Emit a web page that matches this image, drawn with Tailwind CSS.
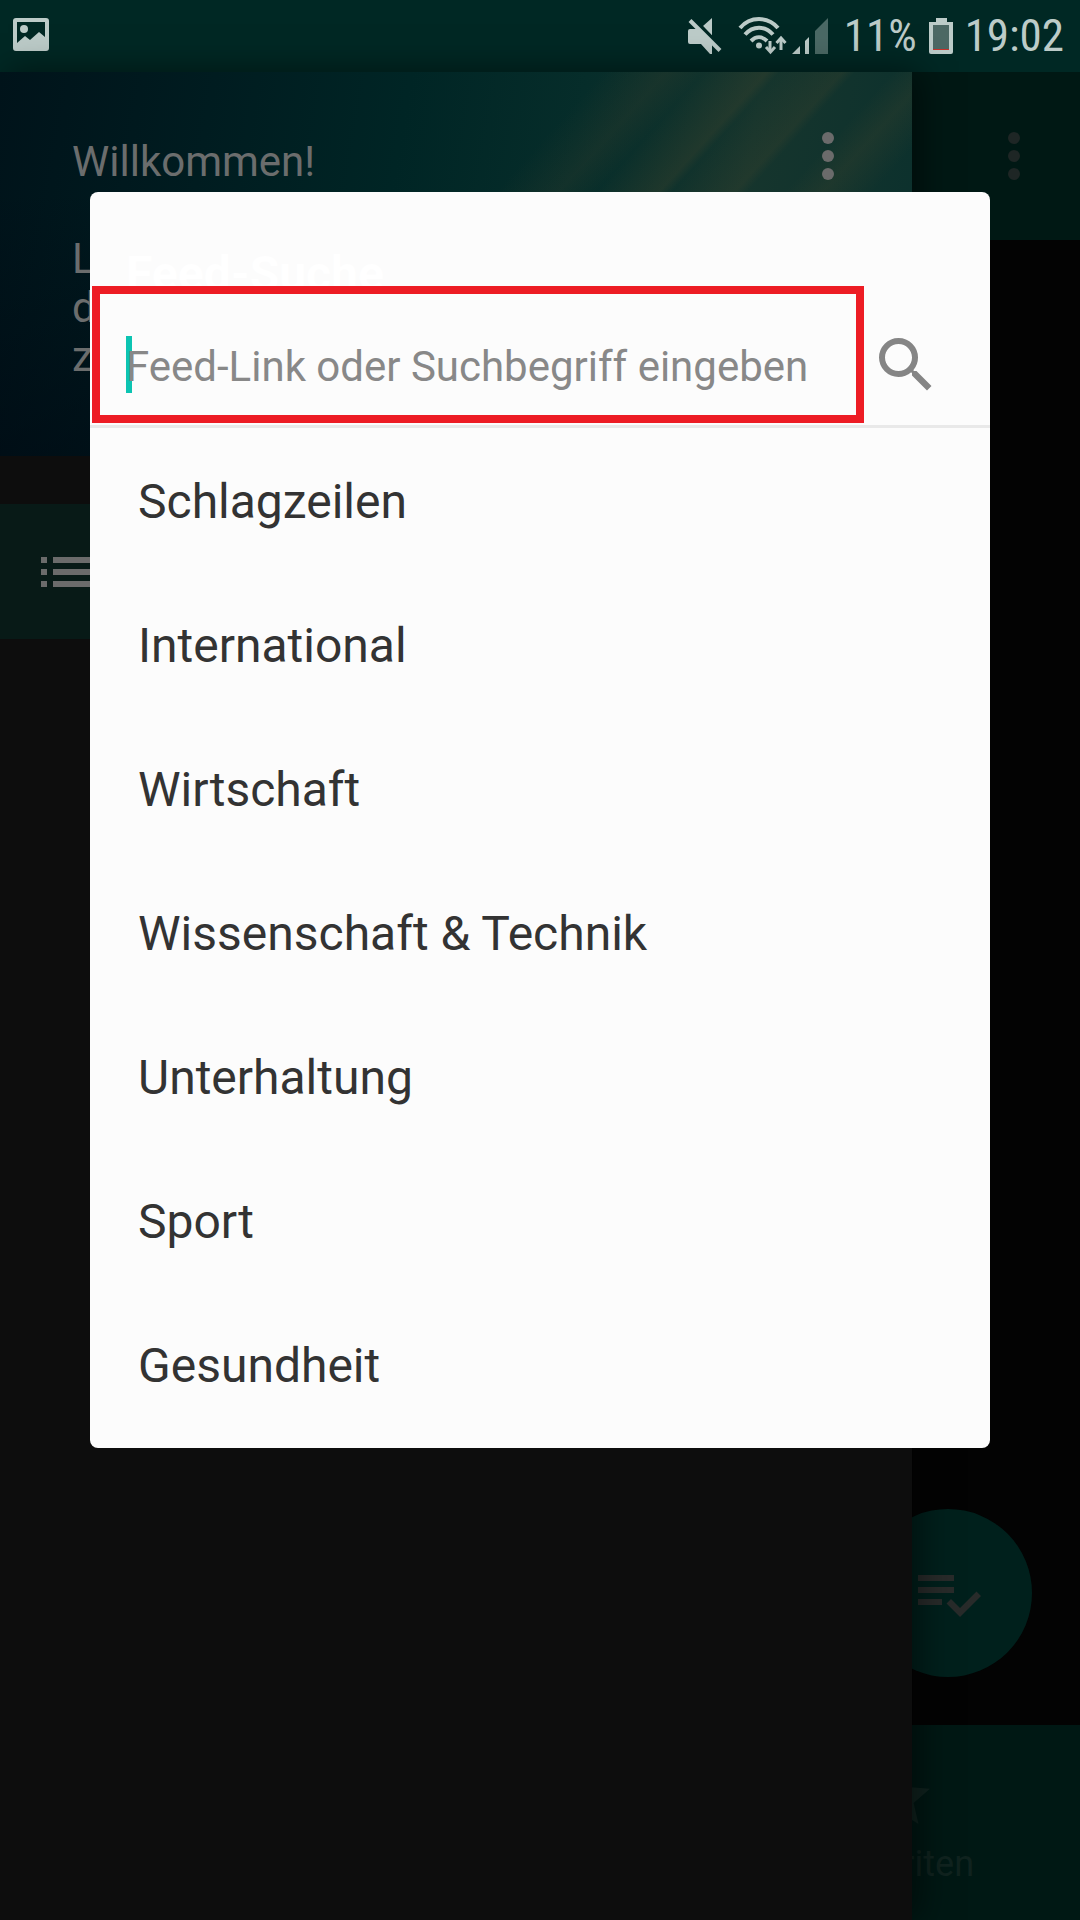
<!DOCTYPE html>
<html lang="de">
<head>
<meta charset="utf-8">
<meta name="viewport" content="width=device-width, initial-scale=1">
<title>Feed-Suche</title>
<script src="https://cdn.jsdelivr.net/npm/@tailwindcss/browser@4"></script>
</head>
<body class="bg-[#030303] font-[Roboto,sans-serif]">
<div class="relative flex min-h-screen flex-col overflow-hidden">

  <!-- Status bar -->
  <header class="flex h-[72px] items-center justify-between bg-[#002824] pr-4 pl-3 text-[#bccbc8]">
    <svg class="h-9 w-[38px]" viewBox="0 0 38 36" fill="currentColor" aria-label="Bild">
      <path fill-rule="evenodd" d="M4 0H34a3 3 0 0 1 3 3V30a3 3 0 0 1-3 3H4a3 3 0 0 1-3-3V3a3 3 0 0 1 3-3zM5 4V25L13 18l5 4 9-8 6 5V4z"/>
      <circle cx="12" cy="11" r="4"/>
    </svg>
    <div class="flex items-center">
      <svg class="mr-4 h-9 w-[34px]" viewBox="0 0 34 36" fill="currentColor" aria-label="Stumm">
        <path d="M15 8 24 0v18z"/>
        <path d="M4 0 34 30" stroke="#002824" stroke-width="4"/>
        <path d="M2 11h8l14 14v11h-2L13 26H2a2 2 0 0 1-2-2V13a2 2 0 0 1 2-2z"/>
        <path d="M2 2.500 32 32.500" stroke="currentColor" stroke-width="4"/>
      </svg>
      <svg class="mr-1 h-10 w-[50px]" viewBox="0 0 50 40" fill="none" stroke="currentColor" stroke-width="4" aria-label="WLAN">
        <path d="M2 12C12 0 30 0 40 12M7 18.500c8-9 20-9 28 0M13 25c5-5 11-5 16 0"/>
        <circle cx="21" cy="29.500" r="3" fill="currentColor" stroke="none"/>
        <path d="M32 25v10M43 34V23" stroke-width="3"/>
        <path d="M28 31 32.500 36l4.500-5M38.500 27l4.500-5 4.500 5" stroke-width="3"/>
      </svg>
      <svg class="mr-4 h-9 w-9" viewBox="0 0 36 36" fill="currentColor" aria-label="Mobilfunk">
        <path d="M0 36 8 28v8zM13 23l4-4v17h-4z"/>
        <path d="M23 13 36 0v36H23z" opacity=".4"/>
      </svg>
      <span class="mr-3 font-['Roboto_Condensed',Roboto,sans-serif] text-[45px] leading-[48px]">11%</span>
      <svg class="mr-3 h-9 w-6" viewBox="0 0 24 36" fill="currentColor" aria-label="Akku">
        <path d="M7 0h11v4h6v30a2 2 0 0 1-2 2H2a2 2 0 0 1-2-2V4h7z"/>
        <path d="M4 7h16v24H4z" fill="#4c6864"/>
        <path d="M4 31h16v1H4z" fill="#c8332c"/>
      </svg>
      <time class="font-['Roboto_Condensed',Roboto,sans-serif] text-[45px] leading-[48px]">19:02</time>
    </div>
  </header>

  <!-- Main screen behind the drawer -->
  <main class="flex flex-1 flex-col">
    <div class="flex h-[168px] items-start justify-end bg-[#001814] pt-12 pr-[30px]">
      <button type="button" aria-label="Weitere Optionen" class="text-[#1e2625]">
        <svg class="h-[72px] w-[72px]" viewBox="0 0 24 24" fill="currentColor"><circle cx="12" cy="6" r="2"/><circle cx="12" cy="12" r="2"/><circle cx="12" cy="18" r="2"/></svg>
      </button>
    </div>
    <div class="flex flex-1 items-end justify-end pr-12 pb-12">
      <button type="button" aria-label="Alle gelesen" class="flex h-[168px] w-[168px] items-center justify-center rounded-full bg-[#00201c] text-[#282b2a]">
        <svg class="h-[72px] w-[72px]" viewBox="0 0 24 24" fill="currentColor"><path d="M14 10H2v2h12v-2zm0-4H2v2h12V6zM2 16h8v-2H2v2zm19.500-4.500L23 13l-6.990 7-4.510-4.500L13 14l3.010 3 5.490-5.500z"/></svg>
      </button>
    </div>
    <nav class="flex h-[195px] justify-end bg-[#001814]">
      <a href="#favoriten" class="flex w-1/3 flex-col items-center pt-9 text-[#10231f]">
        <svg class="h-[72px] w-[72px]" viewBox="0 0 24 24" fill="currentColor"><path d="M12 17.270 18.180 21l-1.640-7.030L22 9.240l-7.190-.610L12 2 9.190 8.630 2 9.240l5.460 4.730L5.820 21z"/></svg>
        <span class="mt-2 text-[36px] leading-[46px]">Favoriten</span>
      </a>
    </nav>
  </main>

  <!-- Navigation drawer -->
  <aside class="absolute top-[72px] right-[168px] bottom-0 left-0 bg-[#0d0d0d] shadow-[8px_0_32px_rgba(0,0,0,0.5)]">
    <div class="relative flex h-[384px] items-start justify-between overflow-hidden bg-[linear-gradient(100deg,#00131a_0%,#001c20_22%,#002525_42%,#062d2a_60%,#16352d_78%,#0a302d_100%)] pt-12 pr-12 pl-[72px] text-[#6b6d6d]">
      <div class="absolute inset-0 bg-[linear-gradient(to_bottom,transparent_30%,rgba(0,6,16,0.5)_100%),linear-gradient(132deg,transparent_48%,rgba(50,60,44,0.3)_53%,transparent_56%,rgba(60,66,44,0.35)_61%,transparent_62%,rgba(60,66,44,0.3)_67%,transparent_68%,transparent_71%,rgba(60,66,44,0.3)_74%,transparent_78%)]"></div>
      <div class="relative pt-[17px] text-[42px] leading-[49px]">
        <p>Willkommen!</p>
        <p class="pt-12">L<br>d<br>z</p>
      </div>
      <button type="button" aria-label="Menü" class="relative text-[#6b6b6b]">
        <svg class="h-[72px] w-[72px]" viewBox="0 0 24 24" fill="currentColor"><circle cx="12" cy="6" r="2"/><circle cx="12" cy="12" r="2"/><circle cx="12" cy="18" r="2"/></svg>
      </button>
    </div>
    <a href="#liste" aria-label="Liste" class="mt-12 flex h-[135px] items-center bg-[#081a17] pl-8 text-[#6b6b6b]">
      <svg class="h-[72px] w-[72px]" viewBox="0 0 24 24" fill="currentColor"><path d="M3 13h2v-2H3v2zm0 4h2v-2H3v2zm0-8h2V7H3v2zm4 4h14v-2H7v2zm0 4h14v-2H7v2zM7 7v2h14V7H7z"/></svg>
    </a>
  </aside>

  <!-- Feed search dialog -->
  <section role="dialog" aria-labelledby="title" class="absolute inset-x-[90px] top-[192px] rounded-lg bg-[#fcfcfc] pb-3">
    <h1 id="title" class="h-[94px] pt-[52px] pl-9 text-[48px] leading-[60px] font-bold text-white">Feed-Suche</h1>
    <form class="mb-[2px] flex h-[137px] pl-[2px]">
      <div class="relative flex flex-1 items-center border-8 border-[#ed1c24] pt-6 pl-[26px]">
        <span class="absolute top-[42px] left-[26px] h-[57px] w-[6px] bg-[#0cc4b2]"></span>
        <input type="text" aria-label="Feed-Link" placeholder="Feed-Link oder Suchbegriff eingeben" class="relative h-[57px] w-full bg-transparent text-[42px] text-[#333] outline-none placeholder:text-[#888]">
      </div>
      <button type="submit" aria-label="Suchen" class="flex w-[126px] items-center pt-5 pl-[6px] text-[#858585]">
        <svg class="h-[72px] w-[72px]" viewBox="0 0 24 24" fill="currentColor"><path d="M15.500 14h-.790l-.280-.270A6.471 6.471 0 0 0 16 9.500 6.500 6.500 0 1 0 9.500 16c1.610 0 3.090-.590 4.230-1.570l.270.280v.790l5 4.990L20.490 19l-4.990-5zm-6 0C7.010 14 5 11.990 5 9.500S7.010 5 9.500 5 14 7.010 14 9.500 11.990 14 9.500 14z"/></svg>
      </button>
    </form>
    <ul class="border-t-[3px] border-[#e9e9e9] text-[48px] leading-[56px] text-[#333]">
      <li><a href="#schlagzeilen" class="flex h-[144px] items-center pt-1 pl-12">Schlagzeilen</a></li>
      <li><a href="#international" class="flex h-[144px] items-center pt-1 pl-12">International</a></li>
      <li><a href="#wirtschaft" class="flex h-[144px] items-center pt-1 pl-12">Wirtschaft</a></li>
      <li><a href="#wissenschaft" class="flex h-[144px] items-center pt-1 pl-12">Wissenschaft &amp; Technik</a></li>
      <li><a href="#unterhaltung" class="flex h-[144px] items-center pt-1 pl-12">Unterhaltung</a></li>
      <li><a href="#sport" class="flex h-[144px] items-center pt-1 pl-12">Sport</a></li>
      <li><a href="#gesundheit" class="flex h-[144px] items-center pt-1 pl-12">Gesundheit</a></li>
    </ul>
  </section>
</div>
</body>
</html>
